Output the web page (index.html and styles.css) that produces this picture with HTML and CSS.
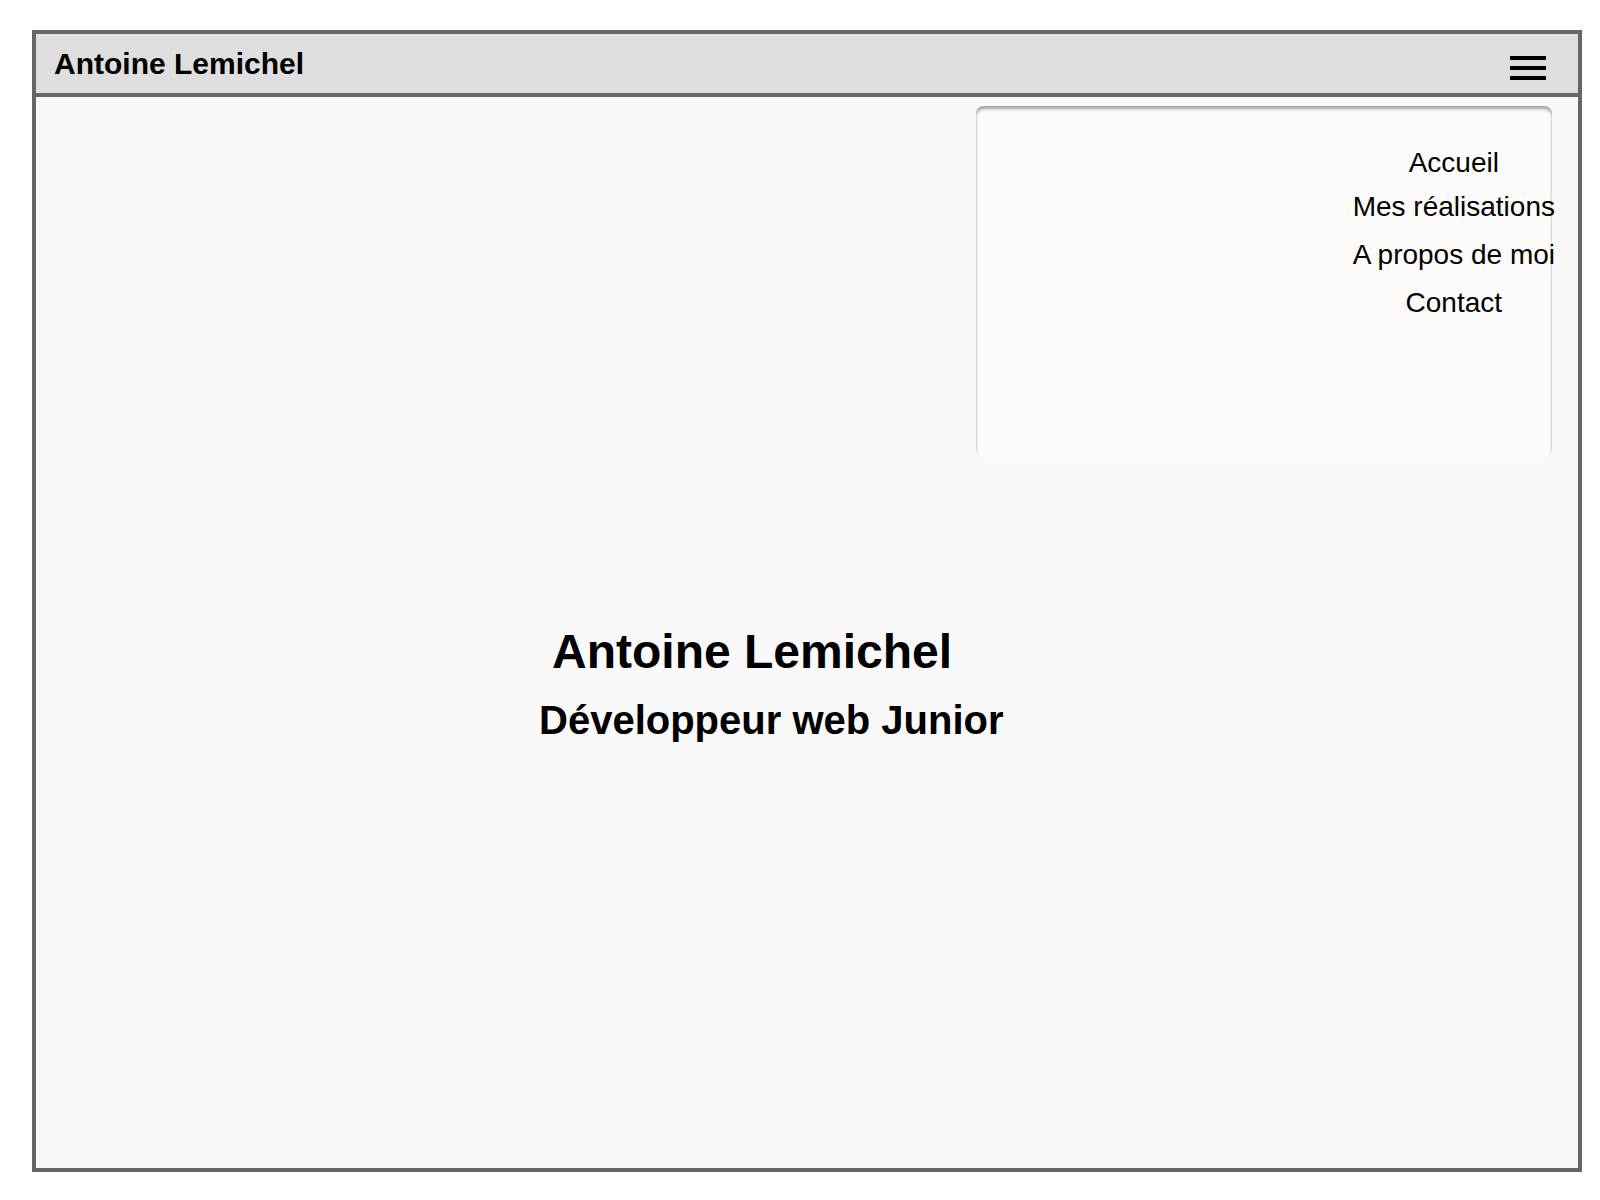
FILE: index.html
```html
<!DOCTYPE html>
<html lang="fr">
<head>
<meta charset="utf-8">
<title>Antoine Lemichel</title>
<link rel="stylesheet" href="styles.css">
</head>
<body>
<div class="frame">
  <header class="topbar">
    <div class="brand">Antoine Lemichel</div>
    <button class="burger" aria-label="Menu">
      <span></span><span></span><span></span>
    </button>
  </header>
  <nav class="dropdown">
    <ul class="menu">
      <li>Accueil</li>
      <li class="menu-second">Mes réalisations</li>
      <li>A propos de moi</li>
      <li>Contact</li>
    </ul>
  </nav>
  <main class="hero">
    <h1 class="hero-title">Antoine Lemichel</h1>
    <h2 class="hero-sub">Développeur web Junior</h2>
  </main>
</div>
</body>
</html>
```
FILE: styles.css
```css
* { box-sizing: border-box; }
html, body { margin: 0; padding: 0; background: #ffffff; }
body {
  font-family: "Liberation Sans", Arial, Helvetica, sans-serif;
  color: #000;
}
.frame {
  position: relative;
  margin: 30px 0 0 32px;
  width: 1550px;
  height: 1142px;
  border: 4px solid #666666;
  background: #f9f9f9;
}
.topbar {
  display: flex;
  align-items: center;
  justify-content: space-between;
  height: 63px;
  padding: 0 32px 0 18px;
  background: #dedede;
  border-bottom: 4px solid #666666;
}
.brand {
  font-size: 30px;
  font-weight: bold;
  line-height: 34px;
}
.burger {
  align-self: flex-start;
  margin-top: 22px;
  width: 36px;
  padding: 0;
  border: 0;
  background: none;
  display: flex;
  flex-direction: column;
  gap: 6px;
}
.burger span {
  display: block;
  height: 4px;
  background: #000;
}
.dropdown {
  position: absolute;
  top: 72px;
  right: 26px;
  width: 576px;
  height: 352px;
  background: #fcfbfa;
  border-radius: 8px;
  box-shadow: inset 0 3px 3px rgba(0, 0, 0, 0.35);
  display: flex;
  justify-content: flex-end;
  padding-top: 41px;
}
.menu {
  list-style: none;
  margin: 0 -3px 0 0;
  padding: 0;
  display: flex;
  flex-direction: column;
  gap: 16px;
  text-align: center;
  font-size: 28px;
  line-height: 32px;
}
.menu-second {
  margin-top: -4px;
}
.hero {
  padding-top: 527px;
}
.hero-title {
  margin: 0 0 16px 516px;
  font-size: 48px;
  line-height: 56px;
  font-weight: bold;
}
.hero-sub {
  margin: 0 0 0 503px;
  font-size: 40px;
  line-height: 48px;
  font-weight: bold;
}
```
